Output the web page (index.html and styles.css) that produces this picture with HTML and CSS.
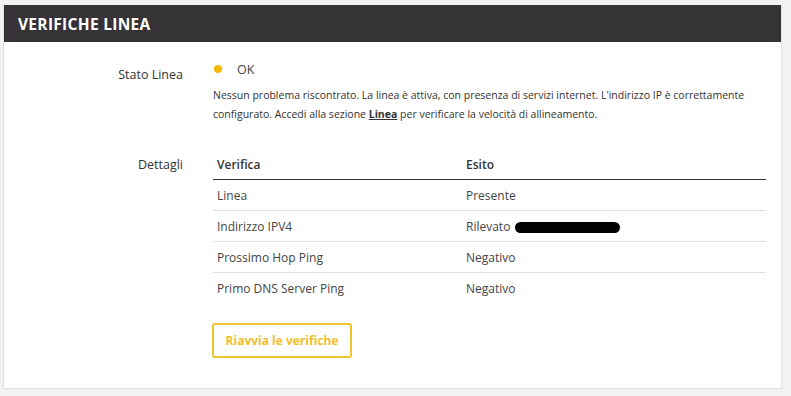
FILE: index.html
```html
<!DOCTYPE html>
<html lang="it">
<head>
<meta charset="utf-8">
<title>Verifiche Linea</title>
<link rel="stylesheet" href="styles.css">
</head>
<body>
<section class="card">
  <header class="card-head"><h1 class="card-title">VERIFICHE LINEA</h1></header>
  <div class="card-body">
    <div class="row row-status">
      <div class="label">Stato Linea</div>
      <div class="value">
        <div class="status"><span class="dot"></span><span class="status-text">OK</span></div>
        <p class="desc">Nessun problema riscontrato. La linea è attiva, con presenza di servizi internet. L'indirizzo IP è correttamente configurato. Accedi alla sezione <a class="link" href="#">Linea</a> per verificare la velocità di allineamento.</p>
      </div>
    </div>
    <div class="row row-details">
      <div class="label">Dettagli</div>
      <div class="value">
        <table class="tbl">
          <thead><tr><th>Verifica</th><th>Esito</th></tr></thead>
          <tbody>
            <tr><td>Linea</td><td>Presente</td></tr>
            <tr><td>Indirizzo IPV4</td><td>Rilevato<span class="redact"></span></td></tr>
            <tr><td>Prossimo Hop Ping</td><td>Negativo</td></tr>
            <tr><td>Primo DNS Server Ping</td><td>Negativo</td></tr>
          </tbody>
        </table>
        <button class="btn" type="button">Riavvia le verifiche</button>
      </div>
    </div>
  </div>
</section>
</body>
</html>
```
FILE: styles.css
```css
html, body { margin: 0; padding: 0; }
body {
  background: #f2f2f2;
  font-family: "Open Sans", "Liberation Sans", sans-serif;
  color: #333;
  padding: 5px 9px 7px 3px;
}
.card {
  background: #fff;
  border: 1px solid #e3e3e3;
  border-top: 0;
  height: 384px;
  box-sizing: border-box;
}
.card-head {
  background: #363336;
  height: 37px;
  display: flex;
  align-items: center;
  padding-left: 14px;
}
.card-title {
  margin: 0;
  color: #fff;
  font-size: 15.5px;
  font-weight: 700;
  letter-spacing: 0.3px;
}
.card-body { padding: 18px 15px 0 0; }
.row { display: flex; }
.label {
  width: 179px;
  text-align: right;
  font-size: 12.5px;
  color: #333;
  flex: none;
}
.value { flex: 1; margin-left: 30px; }
.row-status .label { padding-top: 6px; }
.status { display: flex; align-items: center; height: 18px; }
.dot {
  width: 8px; height: 8px; border-radius: 50%;
  background: #f5b800;
  margin-left: 1px;
  margin-right: 15px;
}
.status-text { font-size: 12.5px; color: #444; }
.desc {
  margin: 8px 0 0;
  font-size: 10.5px;
  line-height: 19px;
  color: #333;
}
.link { color: #333; font-weight: 700; text-decoration: underline; }
.row-details { margin-top: 31px; }
.row-details .label { padding-top: 1px; }
.tbl {
  width: 100%;
  border-collapse: collapse;
  font-size: 12px;
}
.tbl th {
  text-align: left;
  font-weight: 600;
  padding: 1px 4px 6px;
  border-bottom: 1.5px solid #333;
  color: #333;
}
.tbl td {
  padding: 0 4px;
  height: 30px;
  border-bottom: 1px solid #e0e0e0;
  color: #444;
}
.tbl tr:last-child td { border-bottom: 0; }
.tbl th:first-child, .tbl td:first-child { width: 241px; }
.redact {
  display: inline-block;
  width: 105px; height: 11px;
  margin-left: 5px;
  background: #000;
  border-radius: 6px;
  vertical-align: -2px;
}
.btn {
  margin-top: 20px;
  margin-left: -1px;
  font-family: inherit;
  font-size: 12px;
  font-weight: 700;
  color: #f0c02a;
  background: #fff;
  border: 2px solid #f0c42a;
  border-radius: 3px;
  width: 140px;
  height: 35px;
  padding: 0;
}
```
